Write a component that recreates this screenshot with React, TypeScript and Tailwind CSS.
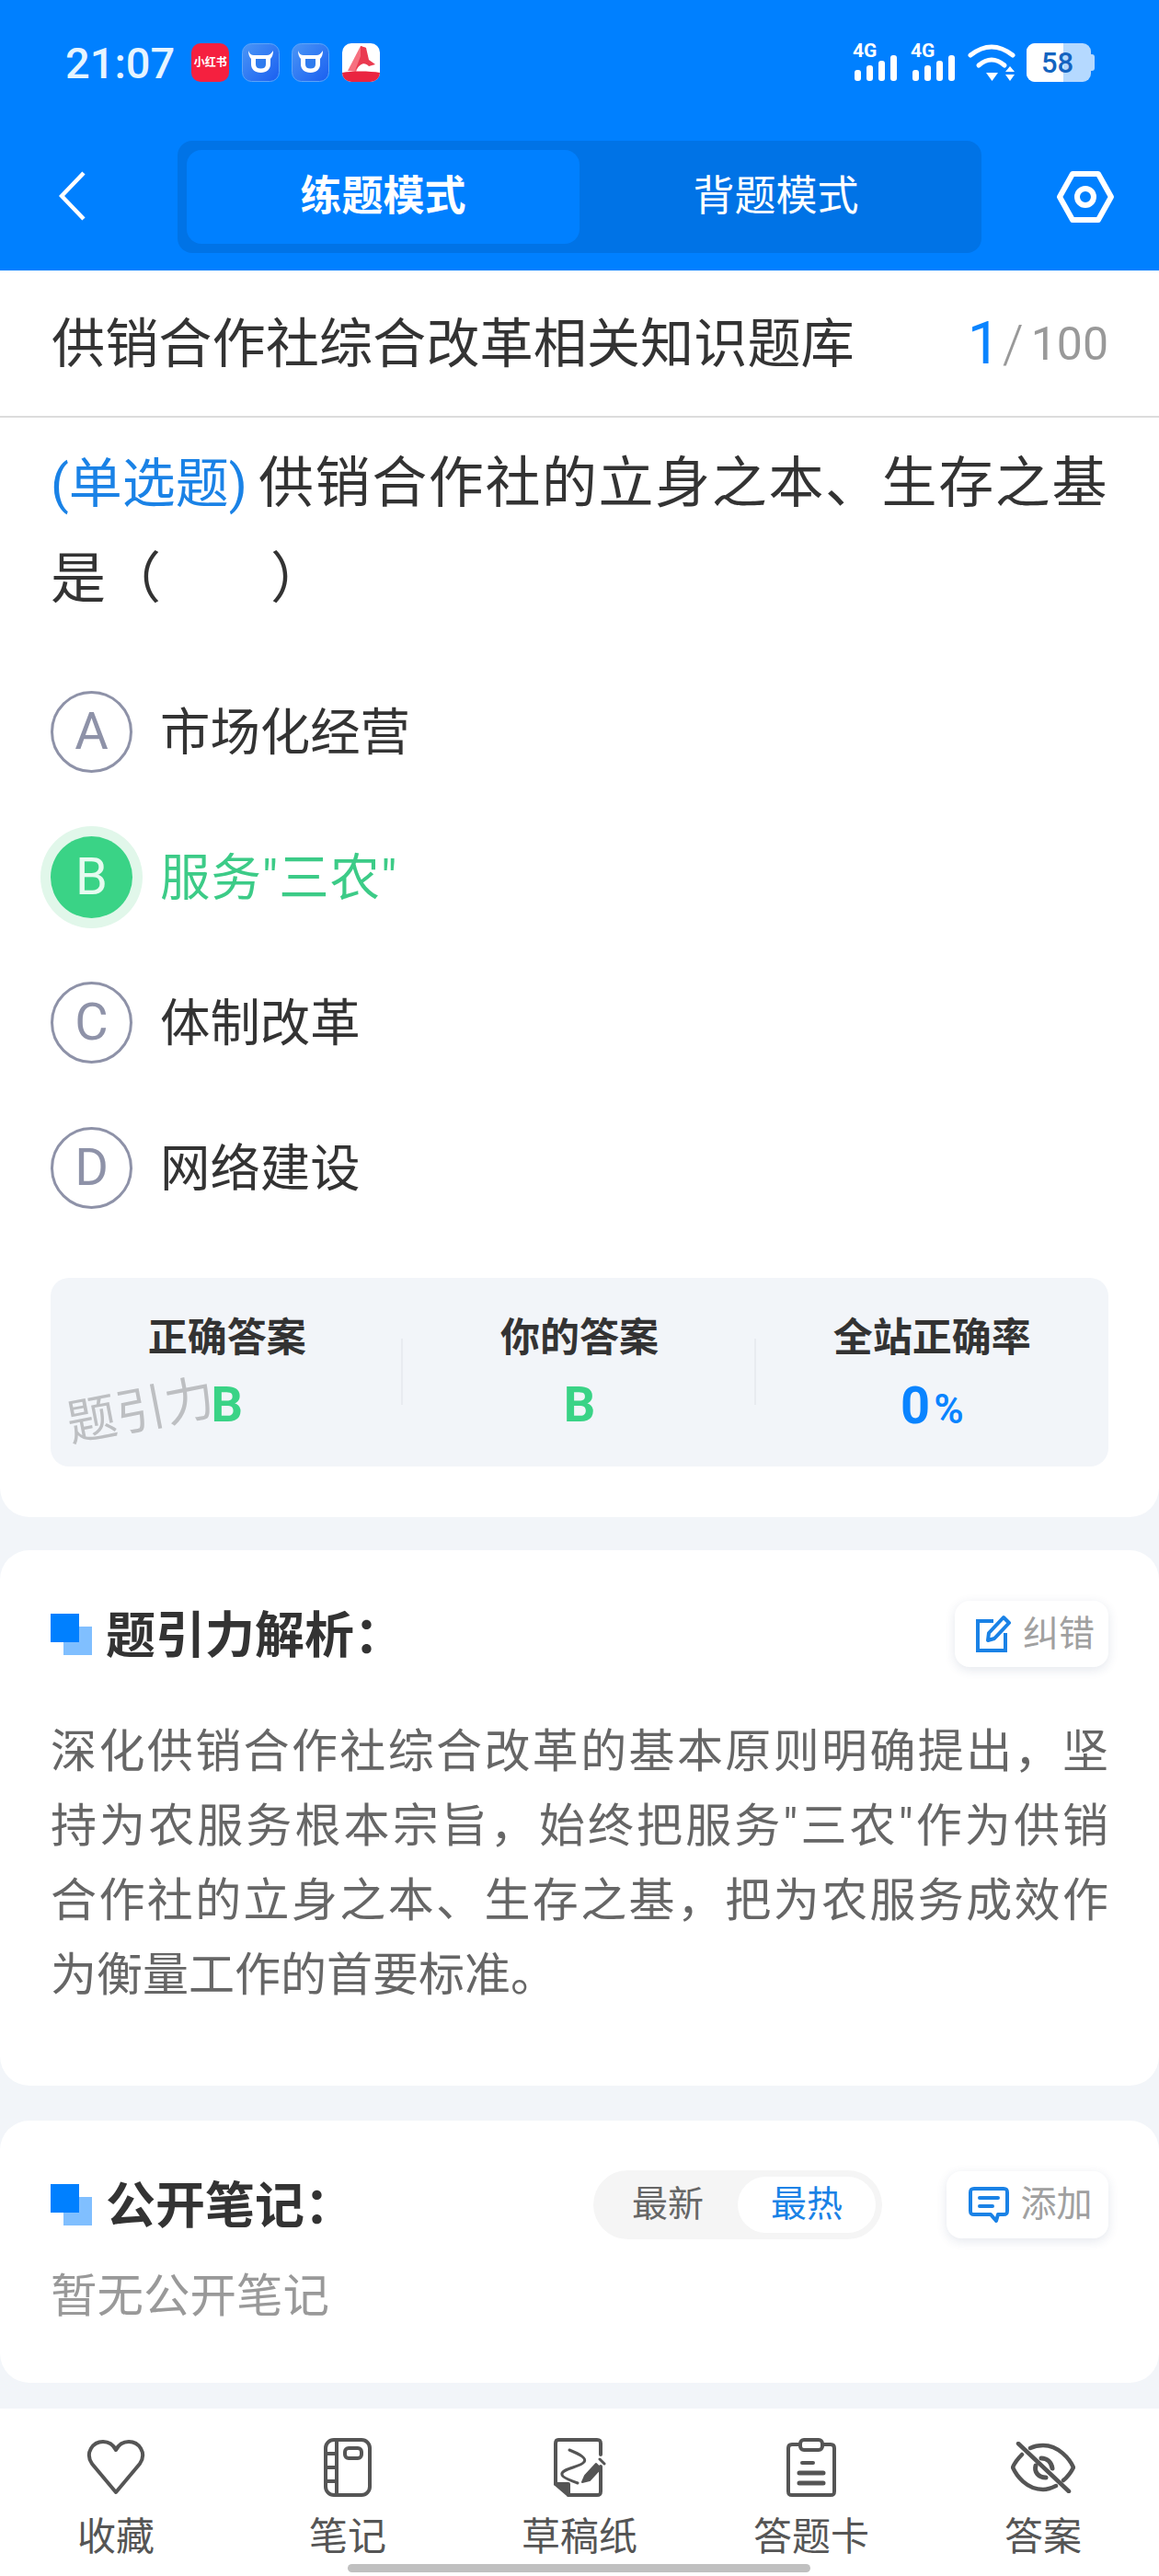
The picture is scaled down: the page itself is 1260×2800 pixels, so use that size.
const appFont = "font-['Roboto','Noto_Sans_CJK_SC',sans-serif]";

function OxIcon() {
  return (
    <svg width="41" height="42" viewBox="0 0 41 42">
      <defs>
        <linearGradient id="ox" x1="0" y1="0" x2="1" y2="1">
          <stop offset="0" stopColor="#4a96f6" />
          <stop offset="1" stopColor="#1a5ff0" />
        </linearGradient>
      </defs>
      <rect x="0.5" y="0.5" width="40" height="41" rx="10" fill="url(#ox)" stroke="#5ea4f7" />
      <path d="M7 8 C8 11 10 13 13 13 H27 C30 13 32 11 34 8 C34 12 33 15 31 17 V23 C31 28 27 32 20.5 32 C14 32 10 28 10 23 V17 C8 15 7 12 7 8 Z" fill="#fff" />
      <path d="M15 17 H26 V23 C26 26 24 27.5 20.5 27.5 C17 27.5 15 26 15 23 Z" fill="#2f7bee" />
    </svg>
  );
}

function AppIcons() {
  return (
    <div className="ml-[18px] flex items-center gap-[13.5px]">
      <div className="flex h-[42px] w-[41px] items-center justify-center rounded-[10px] bg-[#f5203f] text-[12px] font-bold leading-none text-white">
        小红书
      </div>
      <OxIcon />
      <OxIcon />
      <div className="relative h-[42px] w-[41px] overflow-hidden rounded-[10px] bg-white">
        <svg width="41" height="42" viewBox="0 0 41 42" className="absolute left-0 top-0">
          <path d="M20 3 L26 5 L15 31 L6 30 Z" fill="#f6707f" />
          <path d="M20 3 L26 5 L29 18 L36 23 L29 25 C24 20 20 22 14 30 L20 14 Z" fill="#ea3a50" />
          <path d="M0 32 C10 30 30 30 41 32 V42 H0 Z" fill="#ea2440" />
        </svg>
      </div>
    </div>
  );
}

function Signal({ x = 0 }: { x?: number }) {
  return (
    <g transform={`translate(${x} 0)`}>
      <text x="0" y="15" fontSize="21" fontWeight="700" fill="#fff" fontFamily="Roboto, sans-serif">4G</text>
      <rect x="2" y="29" width="7" height="12" rx="3" fill="#fff" />
      <rect x="15" y="24" width="7" height="17" rx="3" fill="#fff" />
      <rect x="28" y="19" width="7" height="22" rx="3" fill="#fff" />
      <rect x="41" y="13" width="7" height="28" rx="3" fill="#fff" />
    </g>
  );
}

function StatusIcons() {
  return (
    <div className="flex items-center">
      <svg width="178" height="50" viewBox="0 -8 178 50" className="-mt-[8px]">
        <Signal />
        <Signal x={63} />
        <g fill="none" stroke="#fff" strokeWidth="5" strokeLinecap="round">
          <path d="M128 13 Q151 -5 174 13" />
          <path d="M137 24 Q151 12 165 24" />
        </g>
        <path d="M145 32 H158 L151.5 41 Z" fill="#fff" />
        <path d="M166 31 L171 25 L176 31 Z M166 34 H176 L171 41 Z" fill="#fff" />
      </svg>
      <div className="relative ml-[11px] flex h-[42px] w-[70px] overflow-hidden rounded-[9px] bg-[#b5d9ff]">
        <div className="h-full w-[40px] bg-white" />
        <span className="absolute left-0 top-0 flex h-full w-[67px] items-center justify-center text-[31px] font-medium leading-none text-[#1464c0]">
          58
        </span>
      </div>
      <div className="h-[18px] w-[4px] rounded-r-[3px] bg-[#b5d9ff]" />
    </div>
  );
}

function Header() {
  return (
    <header className="h-[294px] bg-[#0080ff] text-white">
      <div className="flex h-[136px] items-center justify-between pl-[71px] pr-[70px]">
        <div className="flex items-center">
          <span className="text-[47px] font-medium leading-none text-[#e6f4ff]">21:07</span>
          <AppIcons />
        </div>
        <StatusIcons />
      </div>
      <div className="flex items-start pl-[64px] pr-[49px] pt-[17px]">
        <svg width="30" height="54" viewBox="0 0 30 54" className="mt-[33px]" fill="none" stroke="#fff" strokeWidth="4.5">
          <path d="M27 2 L3 27 L27 52" />
        </svg>
        <div className="ml-[99px] flex h-[122px] w-[875px] rounded-[16px] bg-[#0073e6] p-[10px]">
          <div className="flex h-full w-[427px] items-center justify-center rounded-[16px] bg-[#0080ff] text-[45px] font-bold">练题模式</div>
          <div className="flex h-full flex-1 items-center justify-center text-[45px]">背题模式</div>
        </div>
        <svg width="62" height="56" viewBox="0 0 62 56" className="ml-[82px] mt-[33px]" fill="none" stroke="#fff" strokeWidth="6" strokeLinejoin="round">
          <path d="M17 3 H45 L59 28 L45 53 H17 L3 28 Z" />
          <circle cx="31" cy="28" r="9" />
        </svg>
      </div>
    </header>
  );
}

function TitleRow() {
  return (
    <div className="flex h-[160px] items-center justify-between border-b-2 border-[#dcdcdc] pl-[56px] pr-[55px] pt-[2px]">
      <span className="text-[58.2px] leading-none text-[#333]">供销合作社综合改革相关知识题库</span>
      <div className="flex items-center text-[#999]">
        <span className="text-[64px] leading-none text-[#0a84ff]">1</span>
        <span className="ml-[2px] text-[58px] leading-none font-light">/</span>
        <span className="ml-[8px] text-[50px] leading-none">100</span>
      </div>
    </div>
  );
}

type OptionProps = { letter: string; text: string; active?: boolean };

function Option({ letter, text, active }: OptionProps) {
  return (
    <div className="flex h-[158px] items-center">
      {active ? (
        <div className="flex h-[89px] w-[89px] items-center justify-center rounded-full bg-[#3ad386] text-[56px] leading-none text-[#e6fbf0] shadow-[0_0_0_11px_#e1f7ea]">
          {letter}
        </div>
      ) : (
        <div className="flex h-[89px] w-[89px] items-center justify-center rounded-full border-[3px] border-[#8e92a8] text-[56px] leading-none text-[#8e92a8]">
          {letter}
        </div>
      )}
      <span className={`ml-[30px] pt-[4px] text-[54.4px] leading-none ${active ? "tracking-[1px] text-[#3ccb87]" : "text-[#333]"}`}>{text}</span>
    </div>
  );
}

function StatCell({ label, children, divider }: { label: string; children: React.ReactNode; divider?: boolean }) {
  return (
    <div className="relative flex flex-col items-center">
      <span className="mt-[39px] text-[43px] font-bold leading-[52px] text-[#333]">{label}</span>
      <div className="mt-[20px] flex h-[60px] items-baseline">{children}</div>
      {divider && <div className="absolute right-0 top-[66px] h-[72px] w-[2px] bg-[#e8ebf0]" />}
    </div>
  );
}

function QuestionCard() {
  return (
    <section className="rounded-b-[32px] bg-white">
      <TitleRow />
      <div className="px-[55px]">
        <div className="pt-[20px] text-[60px] leading-[104px] text-[#333]">
          <p className="flex justify-between">
            <span className="text-[58px] text-[#1a82e6]">(单选题)</span>
            <span className="tracking-[1.6px]">供销合作社的立身之本、生存之基</span>
          </p>
          <p>是（{"\u00a0\u00a0\u00a0\u00a0\u00a0\u00a0\u00a0\u00a0"}）</p>
        </div>
        <div className="mt-[34px]">
          <Option letter="A" text="市场化经营" />
          <Option letter="B" text={'服务"三农"'} active />
          <Option letter="C" text="体制改革" />
          <Option letter="D" text="网络建设" />
        </div>
        <div className="relative mt-[41px] grid h-[205px] grid-cols-3 rounded-[20px] bg-[#f2f5f9]">
          <StatCell label="正确答案" divider>
            <span className="text-[54px] font-bold leading-none text-[#3ad386]">B</span>
          </StatCell>
          <StatCell label="你的答案" divider>
            <span className="text-[54px] font-bold leading-none text-[#3ad386]">B</span>
          </StatCell>
          <StatCell label="全站正确率">
            <span className="text-[56px] font-bold leading-none text-[#0a84ff]">0</span>
            <span className="ml-[4px] text-[44px] font-semibold leading-none text-[#0a84ff]">%</span>
          </StatCell>
          <span className="absolute left-[17px] top-[118px] -rotate-[11deg] text-[54px] leading-none text-[#bdbfc2]">题引力</span>
        </div>
      </div>
      <div className="h-[55px]" />
    </section>
  );
}

function SectionTitle({ text }: { text: string }) {
  return (
    <div className="flex items-center">
      <div className="relative h-[45px] w-[45px]">
        <div className="absolute bottom-0 right-0 h-[31px] w-[31px] bg-[#80bfff]" />
        <div className="absolute left-0 top-0 h-[31px] w-[31px] bg-[#0080ff]" />
      </div>
      <h2 className="ml-[15px] pt-[5px] text-[54px] font-bold leading-none text-[#333]">{text}</h2>
    </div>
  );
}

function SmallButton({ icon, text, className }: { icon: React.ReactNode; text: string; className: string }) {
  return (
    <div className={`flex items-center justify-center rounded-[16px] bg-white pl-[7px] shadow-[0_3px_12px_rgba(30,60,110,0.12)] ${className}`}>
      {icon}
      <span className="ml-[12px] text-[39px] leading-none text-[#a0a0a0]">{text}</span>
    </div>
  );
}

const analysisLines = [
  "深化供销合作社综合改革的基本原则明确提出，坚",
  '持为农服务根本宗旨，始终把服务"三农"作为供销',
  "合作社的立身之本、生存之基，把为农服务成效作",
];

function AnalysisCard() {
  return (
    <section className="mt-[36px] h-[582px] rounded-[32px] bg-white px-[55px] pt-[55px]">
      <div className="flex items-center justify-between">
        <SectionTitle text="题引力解析：" />
        <SmallButton
          className="h-[72px] w-[167px]"
          text="纠错"
          icon={
            <svg width="40" height="42" viewBox="0 0 40 42" fill="none" stroke="#1a82e6" strokeWidth="4">
              <path d="M20 7 H3 V39 H33 V20" />
              <path d="M14 28 L15 20 L31 3 L37 9 L21 26 Z" strokeLinejoin="round" />
            </svg>
          }
        />
      </div>
      <div className="mt-[52px] text-[50px] leading-[81px] text-[#666]">
        {analysisLines.map((line) => (
          <p key={line} className="[text-align-last:justify]">
            {line}
          </p>
        ))}
        <p>为衡量工作的首要标准。</p>
      </div>
    </section>
  );
}

function NotesCard() {
  return (
    <section className="mt-[38px] h-[285px] rounded-[32px] bg-white px-[55px] pt-[54px]">
      <div className="flex items-center">
        <SectionTitle text="公开笔记：" />
        <div className="ml-auto flex h-[75px] w-[314px] items-center rounded-full bg-[#f5f5f5] pr-[7px]">
          <span className="flex-1 pl-[5px] text-center text-[39px] leading-none text-[#666]">最新</span>
          <span className="flex h-[61px] w-[150px] items-center justify-center rounded-full bg-white text-[39px] leading-none text-[#1a82e6]">最热</span>
        </div>
        <SmallButton
          className="ml-[70px] h-[73px] w-[176px]"
          text="添加"
          icon={
            <svg width="44" height="40" viewBox="0 0 44 40" fill="none" stroke="#1a82e6" strokeWidth="4" strokeLinecap="round" strokeLinejoin="round">
              <path d="M6 2 H38 C41 2 42 3 42 6 V26 C42 29 41 30 38 30 H32 L30 37 L24 30 H6 C3 30 2 29 2 26 V6 C2 3 3 2 6 2 Z" />
              <path d="M12 12 H32 M12 21 H26" />
            </svg>
          }
        />
      </div>
      <p className="mt-[37px] text-[50.5px] leading-none text-[#999]">暂无公开笔记</p>
    </section>
  );
}

const tabIcons = [
  <svg key="heart" width="66" height="62" viewBox="0 0 66 62" fill="none" stroke="#555" strokeWidth="4" strokeLinejoin="round">
    <path d="M33 58 L7 27 C-1 15 8 3 19 3 C25 3 30 6 33 12 C36 6 41 3 47 3 C58 3 67 15 59 27 Z" />
  </svg>,
  <svg key="book" width="52" height="64" viewBox="0 0 52 64" fill="none" stroke="#555" strokeWidth="4">
    <rect x="2" y="2" width="48" height="60" rx="9" />
    <path d="M14 2 V62 M2 17 H14 M2 32 H14 M2 47 H14" />
    <rect x="23" y="11" width="18" height="11" rx="4" />
  </svg>,
  <svg key="sketch" width="58" height="64" viewBox="0 0 58 64" fill="none" stroke="#555" strokeWidth="4" strokeLinecap="round" strokeLinejoin="round">
    <path d="M3 50 V6 C3 3 4 2 6 2 H48 C51 2 52 3 52 6 V18" />
    <path d="M52 31 V58 C52 61 51 62 48 62 H17" />
    <path d="M3 50 H17 V62 Z" fill="#555" />
    <path d="M18 13 C30 18 37 22 34 26 C30 32 8 33 10 40 C11 44 20 46 27 49" strokeWidth="3" />
    <path d="M35 41 L47 28 L52 33 L40 46 L32 48 Z" fill="#555" strokeWidth="2" />
    <path d="M51 23 L56 28" strokeWidth="3" />
  </svg>,
  <svg key="card" width="56" height="64" viewBox="0 0 56 64" fill="none" stroke="#555" strokeWidth="4" strokeLinecap="round" strokeLinejoin="round">
    <path d="M16 7 H7 C4 7 3 9 3 11 V58 C3 61 4 62 7 62 H49 C52 62 53 61 53 58 V11 C53 9 52 7 49 7 H40" />
    <rect x="16" y="2" width="24" height="11" rx="4" />
    <path d="M18 27 H30" />
    <path d="M15 38 H41 M15 49 H41" strokeWidth="5" />
  </svg>,
  <svg key="eye" width="70" height="56" viewBox="0 0 70 56" fill="none" stroke="#555" strokeWidth="4.5" strokeLinecap="round">
    <path d="M12 14 C8 18 4 23 2 28 C6 37 17 52 35 52 C41 52 45 50 49 48" />
    <path d="M21 7 C25 5 30 4 35 4 C52 4 64 19 68 28 C65 34 62 38 57 42" />
    <path d="M27 26 C25 33 30 39 38 39" strokeWidth="5" />
    <path d="M33 18 C39 18 44 22 45 29" strokeWidth="5" />
    <path d="M8 2 L63 54" />
  </svg>,
];

const tabLabels = ["收藏", "笔记", "草稿纸", "答题卡", "答案"];

function BottomBar() {
  return (
    <footer className="relative mt-[28px] h-[182px] bg-white">
      <div className="grid h-full grid-cols-5 pt-[31px]">
        {tabLabels.map((label, i) => (
          <div key={label} className="flex flex-col items-center">
            <div className="flex h-[66px] items-center">{tabIcons[i]}</div>
            <span className="mt-[22px] text-[42px] leading-none text-[#555]">{label}</span>
          </div>
        ))}
      </div>
      <div className="absolute bottom-[4px] left-[378px] h-[9px] w-[503px] rounded-full bg-[#c0c0c0]" />
    </footer>
  );
}

export default function App() {
  return (
    <div className={`h-[2800px] w-[1260px] overflow-hidden bg-[#f2f5f9] ${appFont}`}>
      <Header />
      <QuestionCard />
      <AnalysisCard />
      <NotesCard />
      <BottomBar />
    </div>
  );
}
